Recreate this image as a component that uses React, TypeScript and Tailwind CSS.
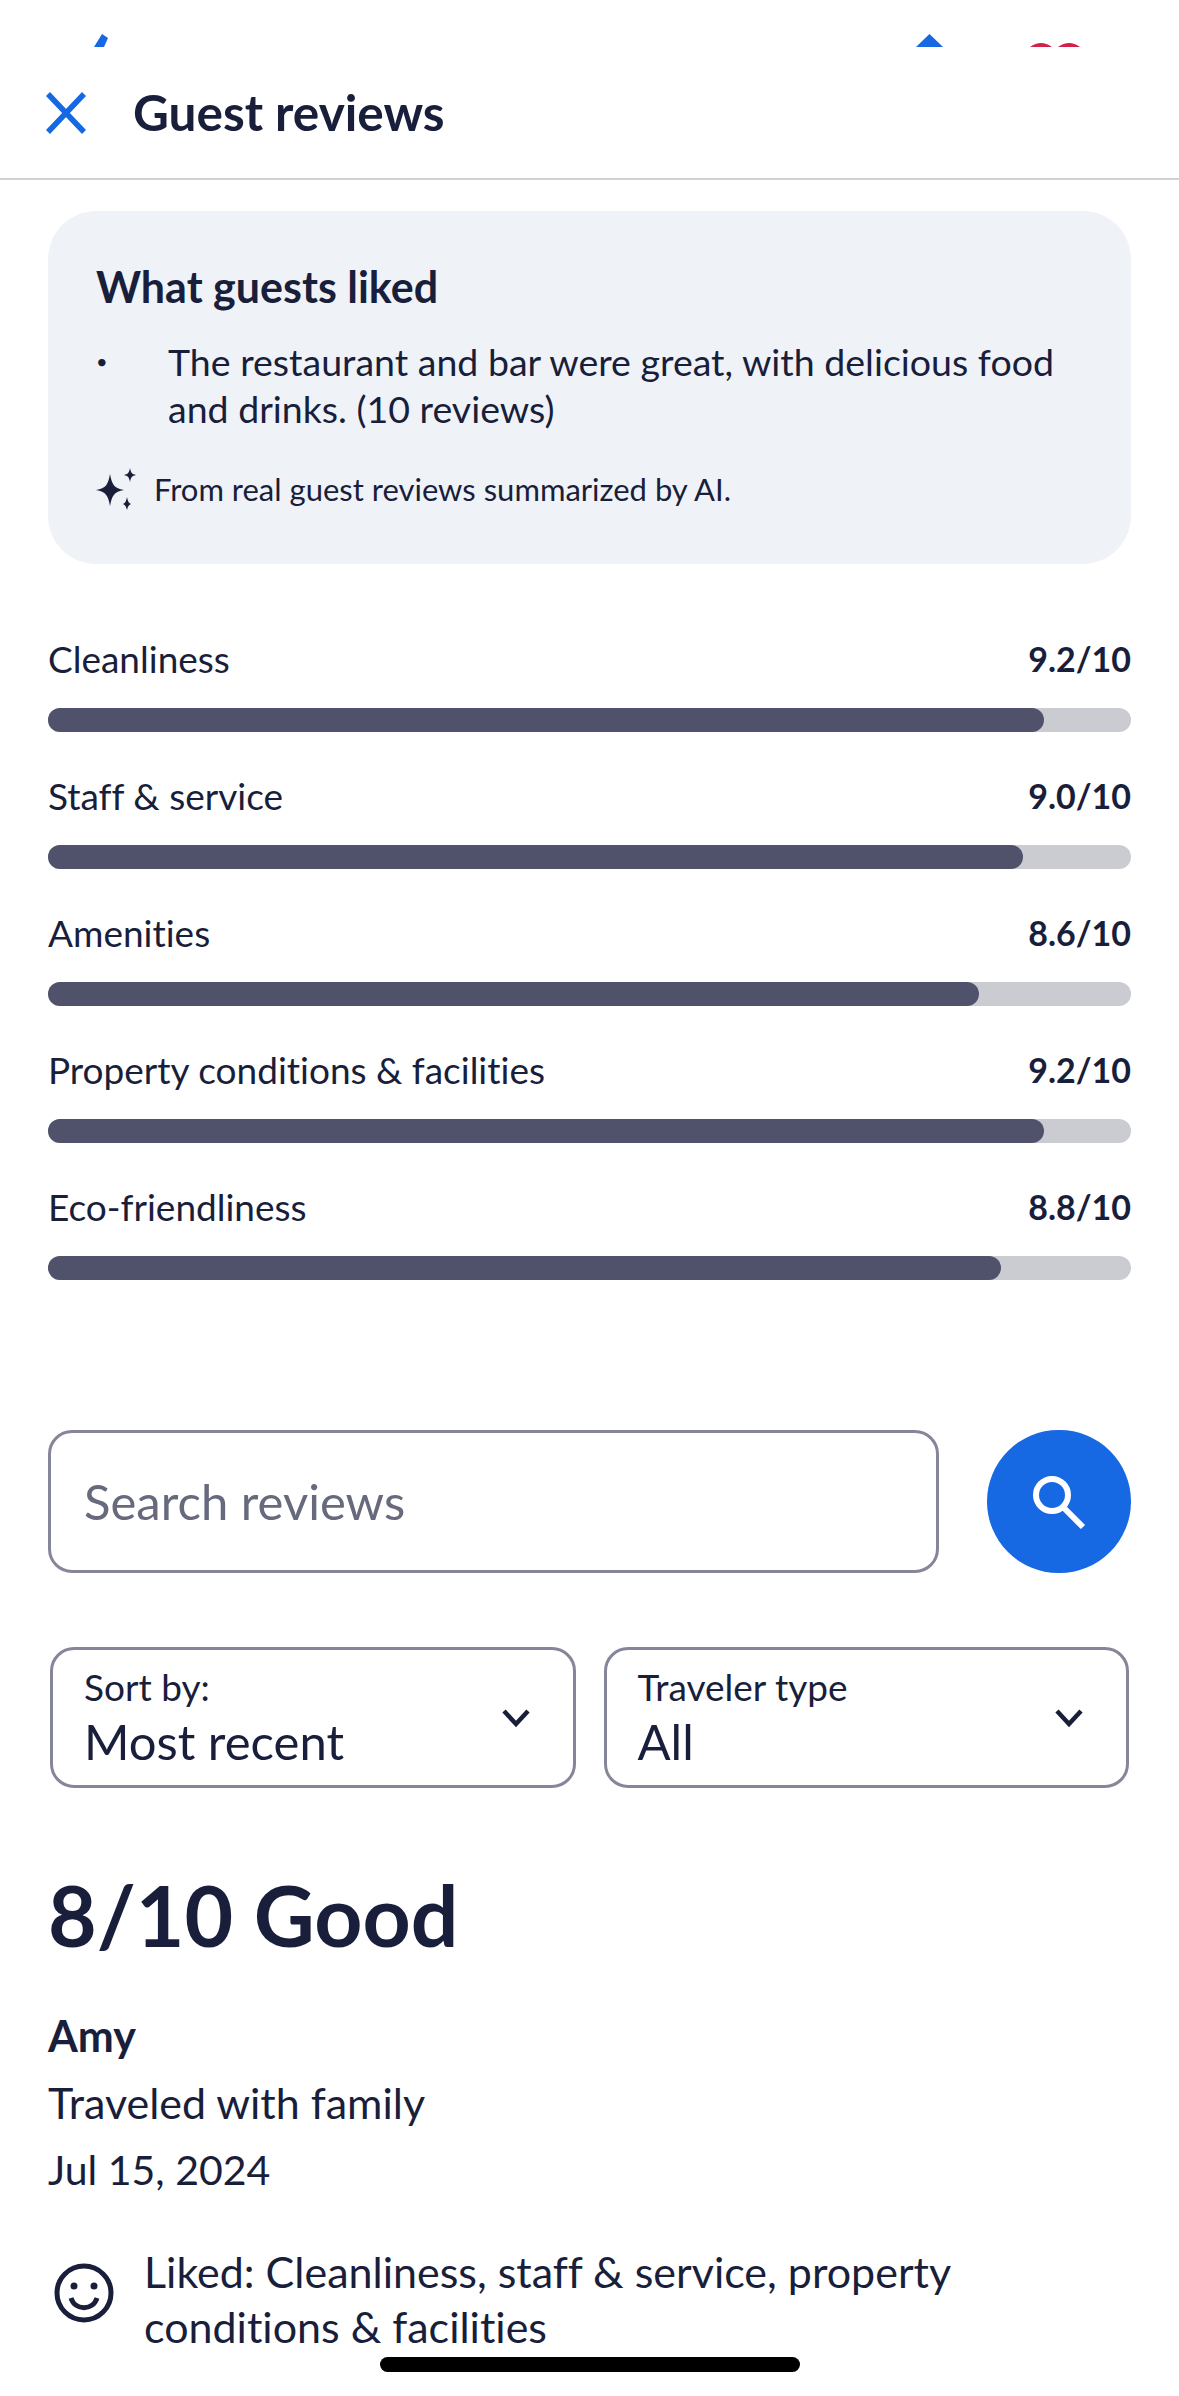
const ink = "text-[#191e3b]";

function Bar({ label, score, value }: { label: string; score: string; value: number }) {
  return (
    <div className="h-[137px]">
      <div className="flex h-[47px] items-center justify-between text-[37px]">
        <span>{label}</span>
        <span className="text-[34px] font-bold">{score}</span>
      </div>
      <div className="mt-[26px] h-[24px] rounded-full bg-[#cbccd2]">
        <div className="h-full rounded-full bg-[#50526b]" style={{ width: `${value * 10}%` }} />
      </div>
    </div>
  );
}

function Chevron() {
  return (
    <svg width="30" height="22" viewBox="0 0 30 22" fill="none" stroke="#191e3b" strokeWidth="4.5">
      <path d="M3 4l12 13L27 4" />
    </svg>
  );
}

function Select({ label, value }: { label: string; value: string }) {
  return (
    <div className="flex h-[141px] flex-1 items-center justify-between rounded-[24px] border-[3px] border-[#85869a] pl-[31px] pr-[42px]">
      <div>
        <div className="text-[37px] leading-[44px]">{label}</div>
        <div className="mt-[3px] text-[49px] leading-[58px]">{value}</div>
      </div>
      <Chevron />
    </div>
  );
}

export default function App() {
  return (
    <div className={`relative h-[2396px] w-[1179px] overflow-hidden bg-white font-['Lato',sans-serif] [font-variant-ligatures:none] ${ink}`}>
      <div className="flex h-[47px] items-end justify-between pl-[94px] pr-[99px]">
        <svg width="16" height="13" viewBox="0 0 16 13" fill="#1668e3"><path d="M0 13L8 0l6 4-4 9z" /></svg>
        <div className="flex items-end gap-[87px]">
          <svg width="27" height="13" viewBox="0 0 27 13" fill="#1668e3"><path d="M13.500 0L27 13H0z" /></svg>
          <svg width="50" height="5" viewBox="0 0 50 5" fill="#d3214a"><path d="M0 5Q11-3 22 5zM28 5Q39-3 50 5z" /></svg>
        </div>
      </div>
      <header className="flex h-[133px] items-center border-b-2 border-[#cfd0d4] pl-[46px]">
        <svg width="40" height="42" viewBox="0 0 40 42" fill="none" stroke="#1668e3" strokeWidth="5.500">
          <path d="M2 2l36 38M38 2L2 40" />
        </svg>
        <h1 className="ml-[47px] text-[49.5px] font-bold">Guest reviews</h1>
      </header>

      <main className="px-[48px] pt-[31px]">
        <section className="h-[353px] rounded-[48px] bg-[#eff3f7] px-[48px] pt-[50px]">
          <h2 className="text-[43px] font-bold leading-[52px]">What guests liked</h2>
          <div className="mt-[25px] flex text-[37.5px] leading-[47px]">
            <span className="w-[72px] shrink-0 text-[20px]">•</span>
            <p>The restaurant and bar were great, with delicious food and drinks. (10 reviews)</p>
          </div>
          <div className="mt-[34px] flex items-center gap-[16px] text-[31px]">
            <svg width="42" height="42" viewBox="0 0 42 42" fill="#191e3b">
              <path d="M14 6c2 11 4 14 14 16-10 2-12 5-14 16-2-11-4-14-14-16 10-2 12-5 14-16z" transform="translate(0 0)" />
              <path d="M34 0c1 5 2 6 6 7-4 1-5 2-6 7-1-5-2-6-6-7 4-1 5-2 6-7zM31 29c1 5 2 6 4 7-2 1-3 2-4 6-1-4-2-5-4-6 2-1 3-2 4-7z" />
            </svg>
            <span>From real guest reviews summarized by AI.</span>
          </div>
        </section>

        <section className="mt-[71px]">
          <Bar label="Cleanliness" score="9.2/10" value={9.2} />
          <Bar label="Staff & service" score="9.0/10" value={9.0} />
          <Bar label="Amenities" score="8.6/10" value={8.6} />
          <Bar label="Property conditions & facilities" score="9.2/10" value={9.2} />
          <Bar label="Eco-friendliness" score="8.8/10" value={8.8} />
        </section>

        <section className="mt-[110px] flex gap-[48px]">
          <div className="flex h-[143px] flex-1 items-center rounded-[24px] border-[3px] border-[#85869a] pl-[33px] text-[49px] text-[#676a7d]">
            Search reviews
          </div>
          <button className="flex h-[143px] w-[144px] items-center justify-center rounded-full bg-[#1668e3]">
            <svg width="56" height="56" viewBox="0 0 56 56" fill="none" stroke="white" strokeWidth="6">
              <circle cx="21" cy="21" r="16" />
              <path d="M32 33l20 20" />
            </svg>
          </button>
        </section>

        <section className="mt-[74px] flex gap-[28px] px-[2px]">
          <Select label="Sort by:" value="Most recent" />
          <Select label="Traveler type" value="All" />
        </section>

        <h2 className="mt-[75px] text-[84px] font-bold leading-[104px]">8/10 Good</h2>
        <div className="mt-[35px] text-[43px] font-bold leading-[67px]">Amy</div>
        <div className="text-[43px] leading-[67px]">Traveled with family</div>
        <div className="text-[41px] leading-[67px]">Jul 15, 2024</div>

        <div className="mt-[41px] flex text-[43px] leading-[55px]">
          <svg className="ml-[6px] mt-[19px] shrink-0" width="60" height="60" viewBox="0 0 60 60" fill="none" stroke="#191e3b" strokeWidth="5">
            <circle cx="30" cy="30" r="27" />
            <circle cx="20" cy="23" r="3.500" fill="#191e3b" stroke="none" />
            <circle cx="40" cy="23" r="3.500" fill="#191e3b" stroke="none" />
            <path d="M17 35c4 13 22 13 26 0" />
          </svg>
          <p className="ml-[30px] w-[900px]">Liked: Cleanliness, staff &amp; service, property conditions &amp; facilities</p>
        </div>
      </main>

      <div className="absolute bottom-[24px] left-[380px] h-[15px] w-[420px] rounded-full bg-black" />
    </div>
  );
}
